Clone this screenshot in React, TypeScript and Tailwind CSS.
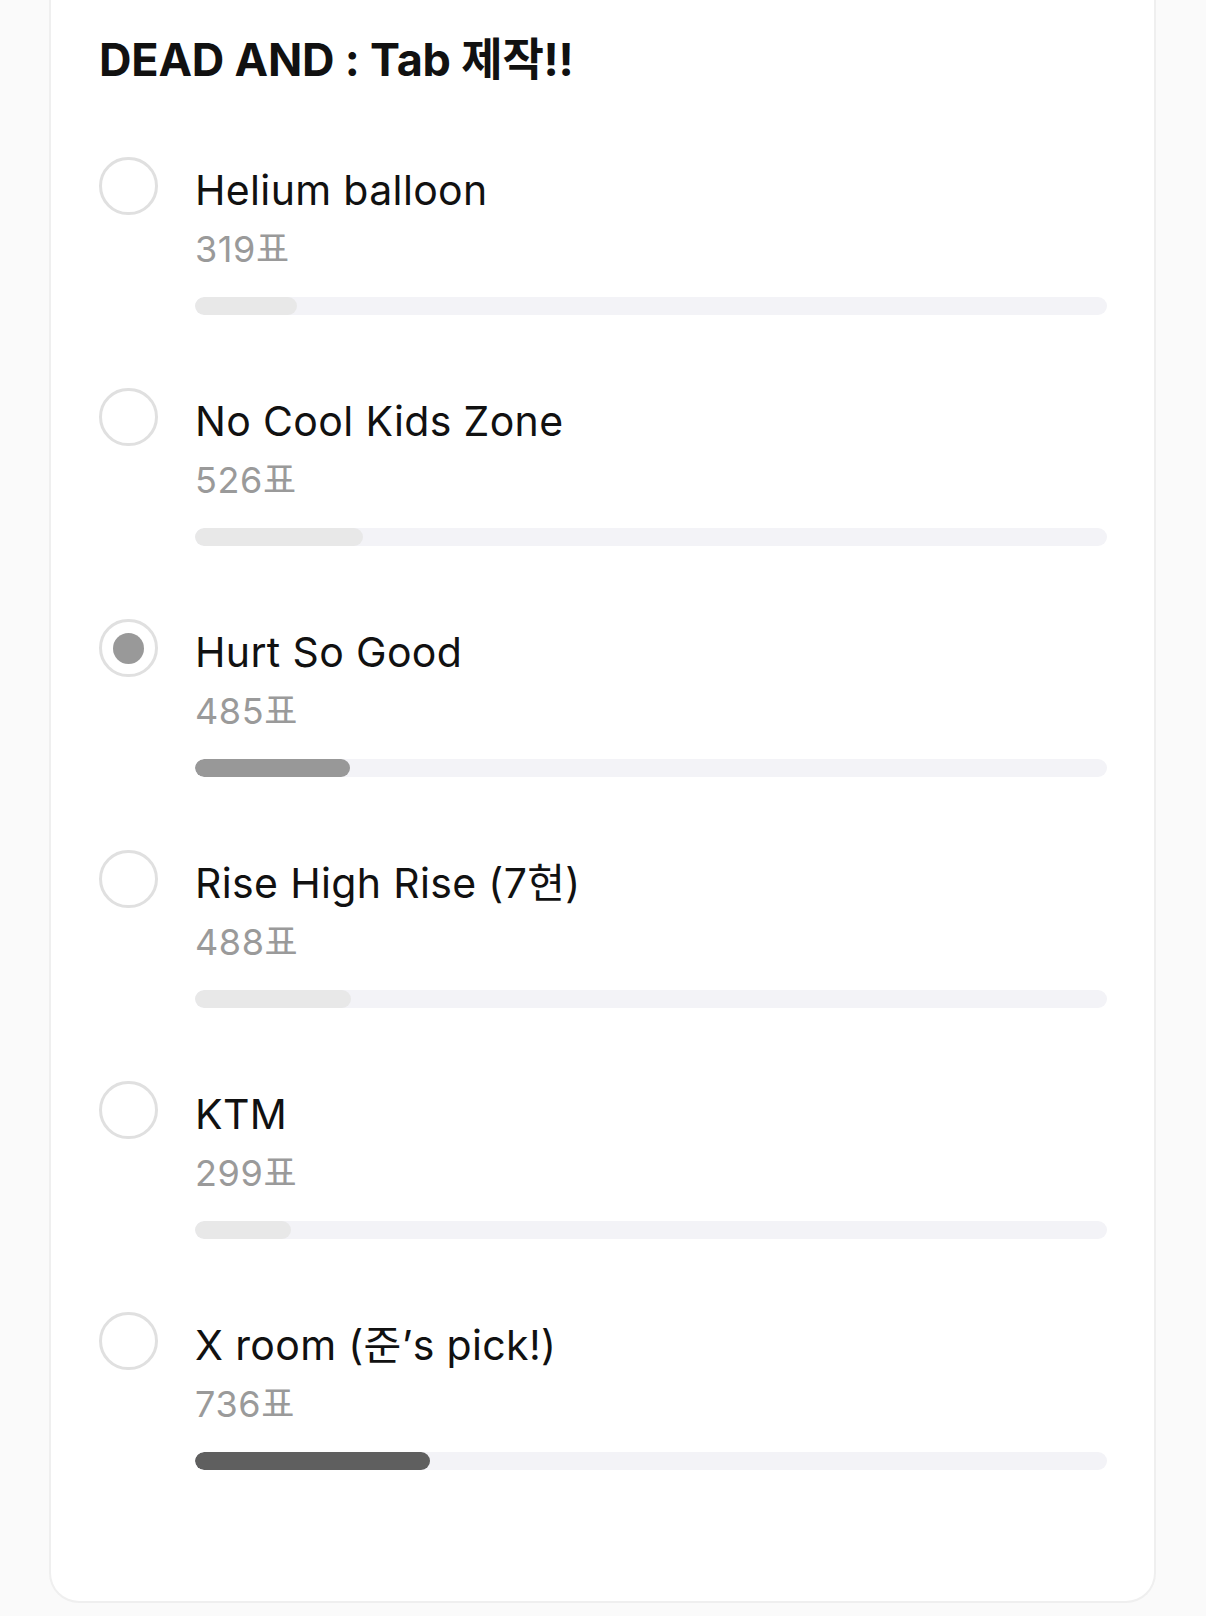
import React from 'react';

interface Option {
  title: string;
  votes: number;
}

const options: Option[] = [
  { title: 'Helium balloon', votes: 319 },
  { title: 'No Cool Kids Zone', votes: 526 },
  { title: 'Hurt So Good', votes: 485 },
  { title: 'Rise High Rise (7현)', votes: 488 },
  { title: 'KTM', votes: 299 },
  { title: 'X room (준’s pick!)', votes: 736 },
];

const SELECTED = 2;

const App: React.FC = () => {
  const total = options.reduce((sum, o) => sum + o.votes, 0);
  const max = Math.max(...options.map((o) => o.votes));

  return (
    <div
      className="min-h-[1616px] bg-[#fafafa] pl-[49px] pr-[50px] pb-[13px]"
      style={{ fontFamily: "Inter, 'Noto Sans CJK KR', sans-serif" }}
    >
      <div className="bg-white border-2 border-t-0 border-[#efefef] rounded-b-[30px] pl-[48px] pr-[47px] pt-[33px] pb-[131px]">
        <h1 className="text-[45px] leading-[54px] font-bold text-[#111] tracking-[-0.2px]">
          DEAD AND : Tab 제작!!
        </h1>

        <div className="mt-[70px] flex flex-col gap-[73px]">
          {options.map((opt, i) => {
            const selected = i === SELECTED;
            const isMax = opt.votes === max;
            const fill = isMax ? 'bg-[#5f5f5f]' : selected ? 'bg-[#989898]' : 'bg-[#e8e8e8]';
            return (
              <div key={opt.title} className="flex items-start gap-[37px]">
                <div className="w-[59px] h-[58px] shrink-0 rounded-full border-[3px] border-[#e0e0e0] flex items-center justify-center">
                  {selected && <div className="w-[31px] h-[31px] rounded-full bg-[#999]" />}
                </div>
                <div className="flex-1 pt-[8px]">
                  <div className="text-[41px] leading-[50px] text-[#111] tracking-[0.35px]">{opt.title}</div>
                  <div className="mt-[14px] text-[36px] leading-[40px] text-[#9a9a9a] tracking-[0.6px]">{opt.votes}표</div>
                  <div className="mt-[28px] h-[18px] rounded-full bg-[#f3f3f7] overflow-hidden">
                    <div
                      className={`h-full rounded-full ${fill}`}
                      style={{ width: `${(opt.votes / total) * 100}%` }}
                    />
                  </div>
                </div>
              </div>
            );
          })}
        </div>
      </div>
    </div>
  );
};

export default App;
